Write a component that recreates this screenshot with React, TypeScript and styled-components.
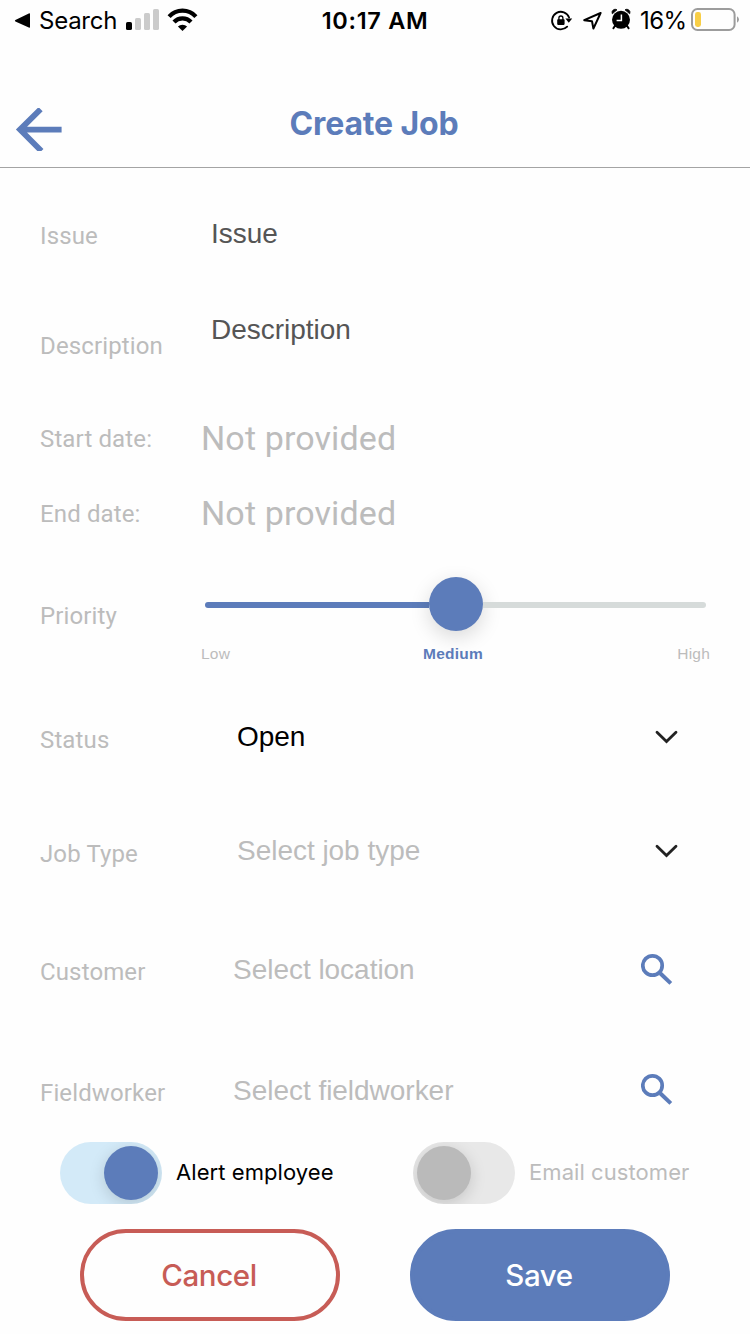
import React, { useState } from "react";
import styled, { createGlobalStyle } from "styled-components";

const BLUE = "#5c7cba";
const GREY = "#bcbcbc";
const RED = "#c75c56";

const GlobalStyle = createGlobalStyle`
  * { box-sizing: border-box; }
  body { margin: 0; background: #fefefe; }
  button { background: none; border: 0; padding: 0; margin: 0; font: inherit; color: inherit; }
`;

const Screen = styled.div`
  width: 750px;
  height: 1334px;
  overflow: hidden;
  display: flex;
  flex-direction: column;
  background: #fefefe;
  font-family: Inter, sans-serif;
`;

const StatusBar = styled.div`
  height: 40px;
  flex: none;
  display: grid;
  grid-template-columns: 1fr auto 1fr;
  color: #000;
  font-size: 24px;
  line-height: 42px;
`;

const StatusGroup = styled.div<{ $end?: boolean }>`
  display: flex;
  justify-content: ${(p) => (p.$end ? "flex-end" : "flex-start")};
  padding: ${(p) => (p.$end ? "0 11px 0 0" : "0 0 0 14px")};
  svg { flex: none; display: block; }
`;

const BackApp = styled.span`
  width: 87px;
  padding-left: 9px;
  letter-spacing: -0.25px;
`;

const Clock = styled.span`
  font-size: 23.5px;
  font-weight: 600;
  letter-spacing: 0.7px;
`;

const BatteryPercent = styled.span`
  width: 60px;
  padding-left: 9px;
  letter-spacing: -0.6px;
`;

const Header = styled.header`
  height: 128px;
  flex: none;
  display: grid;
  grid-template-columns: 80px 1fr 82px;
  border-bottom: 1px solid #a4a4a4;
`;

const BackButton = styled.button`
  height: 44px;
  margin: 67px 0 0 15px;
  text-align: left;
  svg { display: block; }
`;

const Title = styled.h1`
  margin: 63px 0 0;
  font-size: 32px;
  line-height: 41px;
  font-weight: 700;
  letter-spacing: -0.15px;
  text-align: center;
  color: ${BLUE};
`;

const Form = styled.main`
  flex: none;
  display: flex;
  flex-direction: column;
`;

const Row = styled.div<{ $height: number }>`
  height: ${(p) => p.$height}px;
  display: grid;
  grid-template-columns: 160px 1fr;
  padding-left: 40px;
  align-items: start;
`;

const Label = styled.label<{ $top: number }>`
  margin-top: ${(p) => p.$top}px;
  font: 400 24px/28px Roboto, sans-serif;
  letter-spacing: 0.13px;
  white-space: nowrap;
  color: ${GREY};
`;

const Field = styled.div<{ $top: number; $left: number; $tone?: string; $iconLift?: number }>`
  margin-top: ${(p) => p.$top}px;
  padding: 0 72px 0 ${(p) => p.$left}px;
  display: flex;
  justify-content: space-between;
  font: 400 28px/32px "Liberation Sans", Arial, sans-serif;
  letter-spacing: -0.03px;
  color: ${(p) => p.$tone ?? GREY};
  svg {
    flex: none;
    display: block;
    margin-top: -${(p) => p.$iconLift ?? 1}px;
  }
`;

const DateValue = styled.div`
  margin-top: 13px;
  padding-left: 1px;
  font: 400 34px/40px Roboto, sans-serif;
  letter-spacing: 0.12px;
  color: ${GREY};
`;

const Slider = styled.div`
  padding: 22px 40px 0 0;
`;

const SliderRail = styled.div`
  height: 54px;
  margin: 0 4px 0 5px;
  display: flex;
  align-items: center;
`;

const Track = styled.div<{ $filled?: boolean }>`
  flex: 1;
  height: 6px;
  margin-top: 2px;
  background: ${(p) => (p.$filled ? BLUE : "#d6dbda")};
  border-radius: ${(p) => (p.$filled ? "3px 0 0 3px" : "0 3px 3px 0")};
`;

const SliderThumb = styled.div`
  width: 54px;
  height: 54px;
  border-radius: 50%;
  background: ${BLUE};
  box-shadow: 0 6px 20px rgba(0, 0, 0, 0.15);
`;

const SliderMarks = styled.div`
  margin-top: 13px;
  padding-left: 1px;
  display: grid;
  grid-template-columns: 222px 60px 1fr;
  font: 400 15.5px/20px "Liberation Sans", Arial, sans-serif;
  color: ${GREY};
`;

const Mark = styled.span<{ $align: string; $active?: boolean }>`
  text-align: ${(p) => p.$align};
  letter-spacing: 0.2px;
  ${(p) => p.$active && `color: ${BLUE}; font-weight: 700;`}
`;

const Toggles = styled.div`
  height: 62px;
  flex: none;
  display: grid;
  grid-template-columns: 353px 1fr;
  padding-left: 60px;
`;

const ToggleItem = styled.div<{ $on: boolean }>`
  display: flex;
  align-items: center;
  gap: 14px;
  font-size: 22px;
  letter-spacing: 0.07px;
  white-space: nowrap;
  color: ${(p) => (p.$on ? "#000" : GREY)};
`;

const ToggleText = styled.span`
  padding-bottom: 2px;
`;

const Switch = styled.button<{ $on: boolean }>`
  width: 102px;
  height: 62px;
  padding: 4px;
  border-radius: 31px;
  overflow: hidden;
  display: flex;
  justify-content: ${(p) => (p.$on ? "flex-end" : "flex-start")};
  background: ${(p) => (p.$on ? "#d3eaf8" : "#e8e8e8")};
`;

const Knob = styled.span<{ $on: boolean }>`
  width: 54px;
  height: 54px;
  border-radius: 50%;
  background: ${(p) => (p.$on ? BLUE : "#bababa")};
  box-shadow: 0 4px 16px rgba(0, 0, 0, 0.15);
`;

const Actions = styled.footer`
  flex: none;
  display: flex;
  gap: 70px;
  padding: 25px 80px 0;
`;

const ActionButton = styled.button<{ $primary?: boolean }>`
  width: 260px;
  height: 92px;
  padding: ${(p) => (p.$primary ? "0 2px 1px 0" : "0 2px 1px 0")};
  border-radius: 46px;
  border: 4px solid ${(p) => (p.$primary ? BLUE : RED)};
  background: ${(p) => (p.$primary ? BLUE : "transparent")};
  color: ${(p) => (p.$primary ? "#fff" : RED)};
  font-family: Inter, sans-serif;
  font-size: 29.5px;
  font-weight: 500;
  letter-spacing: -0.4px;
`;

const BackTriangle = () => (
  <svg width="16" height="40" viewBox="0 0 16 40">
    <path d="M16 14V27Q16 28.2 14.8 27.6L1.4 21.5Q.3 20.7 1.4 19.9L14.8 13.4Q16 12.8 16 14Z" />
  </svg>
);

const Signal = () => (
  <svg width="50" height="40" viewBox="0 0 50 40">
    <rect x="9" y="22" width="6" height="8" rx="1.6" />
    <g fill="#cbcbcb">
      <rect x="18" y="18" width="6" height="12" rx="1.6" />
      <rect x="27" y="13" width="6" height="17" rx="1.6" />
      <rect x="36" y="9" width="6" height="21" rx="1.6" />
    </g>
  </svg>
);

const Wifi = () => (
  <svg width="32" height="40" viewBox="0 0 32 40">
    <g fill="none" stroke="#000" strokeWidth="4.2">
      <path d="M2.1 16.6A18.2 18.2 0 0 1 28.9 16.6" />
      <path d="M7 22A11.6 11.6 0 0 1 24 22" />
    </g>
    <path d="M15.5 31L10.9 26.6A6.4 6.4 0 0 1 20.1 26.6Z" />
  </svg>
);

const RotationLock = () => (
  <svg width="25" height="40" viewBox="0 0 25 40">
    <path
      d="M17.2 26.7A8.8 8.8 0 1 1 19.1 17.5"
      fill="none"
      stroke="#000"
      strokeWidth="1.8"
      strokeLinecap="round"
    />
    <path d="M15.4 18.6H22.2L18.8 22.8Z" />
    <rect x="7.2" y="19.3" width="7.4" height="5.6" rx=".8" />
    <path d="M8.9 20V18a2 2 0 0 1 4 0V20" fill="none" stroke="#000" strokeWidth="1.3" />
  </svg>
);

const LocationArrow = () => (
  <svg width="31" height="40" viewBox="0 0 31 40">
    <path
      d="M25.6 13L9.2 20.2L17 21.2L18.4 28.6Z"
      fill="none"
      stroke="#000"
      strokeWidth="2"
      strokeLinejoin="round"
    />
  </svg>
);

const Alarm = () => (
  <svg width="25" height="40" viewBox="0 0 25 40">
    <circle cx="15" cy="19.8" r="9" />
    <path d="M6.3 13.8A3.2 3.2 0 0 1 11 9.8ZM23.7 13.8A3.2 3.2 0 0 0 19 9.8Z" stroke="#000" strokeWidth=".8" />
    <path d="M9 25.8L7.4 28.2M21 25.8L22.6 28.2" stroke="#000" strokeWidth="2" strokeLinecap="round" />
    <path d="M15.4 14.6V20.4H10.6" fill="none" stroke="#fff" strokeWidth="1.5" />
  </svg>
);

const Battery = () => (
  <svg width="48" height="40" viewBox="0 0 48 40">
    <rect x="1" y="9" width="42.6" height="21" rx="5.5" fill="none" stroke="#9c9c9c" strokeWidth="2" />
    <rect x="4" y="12" width="6" height="15" rx="2.4" fill="#f8ce46" />
    <path d="M46 16.2Q48 17.4 48 19.5T46 22.8Z" fill="#9c9c9c" />
  </svg>
);

const ArrowLeft = () => (
  <svg width="48" height="43" viewBox="0 0 48 43">
    <path d="M25.6 1.2L5 21.6L26.4 43M5 21.6H46.6" fill="none" stroke={BLUE} strokeWidth="5.8" />
  </svg>
);

const Chevron = () => (
  <svg width="24" height="32" viewBox="0 0 24 32">
    <path d="M3 12.2L12.5 21.5L22 12.2" fill="none" stroke="#222" strokeWidth="2.8" strokeLinecap="round" />
  </svg>
);

const Search = () => (
  <svg width="37" height="32" viewBox="0 0 37 32">
    <circle cx="11.5" cy="12.5" r="9.7" fill="none" stroke={BLUE} strokeWidth="3.7" />
    <path d="M19.2 20.2L29.8 30.4" stroke={BLUE} strokeWidth="4" />
  </svg>
);

export default function App() {
  const [alertEmployee, setAlertEmployee] = useState(true);
  const [emailCustomer, setEmailCustomer] = useState(false);

  return (
    <Screen>
      <GlobalStyle />
      <StatusBar>
        <StatusGroup>
          <BackTriangle />
          <BackApp>Search</BackApp>
          <Signal />
          <Wifi />
        </StatusGroup>
        <Clock>10:17 AM</Clock>
        <StatusGroup $end>
          <RotationLock />
          <LocationArrow />
          <Alarm />
          <BatteryPercent>16%</BatteryPercent>
          <Battery />
        </StatusGroup>
      </StatusBar>

      <Header>
        <BackButton aria-label="Back">
          <ArrowLeft />
        </BackButton>
        <Title>Create Job</Title>
      </Header>

      <Form>
        <Row $height={110}>
          <Label $top={54}>Issue</Label>
          <Field $top={50} $left={11} $tone="#555">Issue</Field>
        </Row>
        <Row $height={127}>
          <Label $top={54}>Description</Label>
          <Field $top={36} $left={11} $tone="#555">Description</Field>
        </Row>
        <Row $height={75}>
          <Label $top={20}>Start date:</Label>
          <DateValue>Not provided</DateValue>
        </Row>
        <Row $height={75}>
          <Label $top={20}>End date:</Label>
          <DateValue>Not provided</DateValue>
        </Row>
        <Row $height={135}>
          <Label $top={47}>Priority</Label>
          <Slider>
            <SliderRail>
              <Track $filled />
              <SliderThumb />
              <Track />
            </SliderRail>
            <SliderMarks>
              <Mark $align="left">Low</Mark>
              <Mark $align="center" $active>Medium</Mark>
              <Mark $align="right">High</Mark>
            </SliderMarks>
          </Slider>
        </Row>
        <Row $height={114}>
          <Label $top={36}>Status</Label>
          <Field $top={31} $left={37} $tone="#000">
            Open
            <Chevron />
          </Field>
        </Row>
        <Row $height={114}>
          <Label $top={36}>Job Type</Label>
          <Field $top={31} $left={37}>
            Select job type
            <Chevron />
          </Field>
        </Row>
        <Row $height={120}>
          <Label $top={40}>Customer</Label>
          <Field $top={36} $left={33}>
            Select location
            <Search />
          </Field>
        </Row>
        <Row $height={104}>
          <Label $top={41}>Fieldworker</Label>
          <Field $top={37} $left={33} $iconLift={2}>
            Select fieldworker
            <Search />
          </Field>
        </Row>
      </Form>

      <Toggles>
        <ToggleItem $on={alertEmployee}>
          <Switch $on={alertEmployee} onClick={() => setAlertEmployee(!alertEmployee)} aria-label="Alert employee">
            <Knob $on={alertEmployee} />
          </Switch>
          <ToggleText>Alert employee</ToggleText>
        </ToggleItem>
        <ToggleItem $on={emailCustomer}>
          <Switch $on={emailCustomer} onClick={() => setEmailCustomer(!emailCustomer)} aria-label="Email customer">
            <Knob $on={emailCustomer} />
          </Switch>
          <ToggleText>Email customer</ToggleText>
        </ToggleItem>
      </Toggles>

      <Actions>
        <ActionButton>Cancel</ActionButton>
        <ActionButton $primary>Save</ActionButton>
      </Actions>
    </Screen>
  );
}
